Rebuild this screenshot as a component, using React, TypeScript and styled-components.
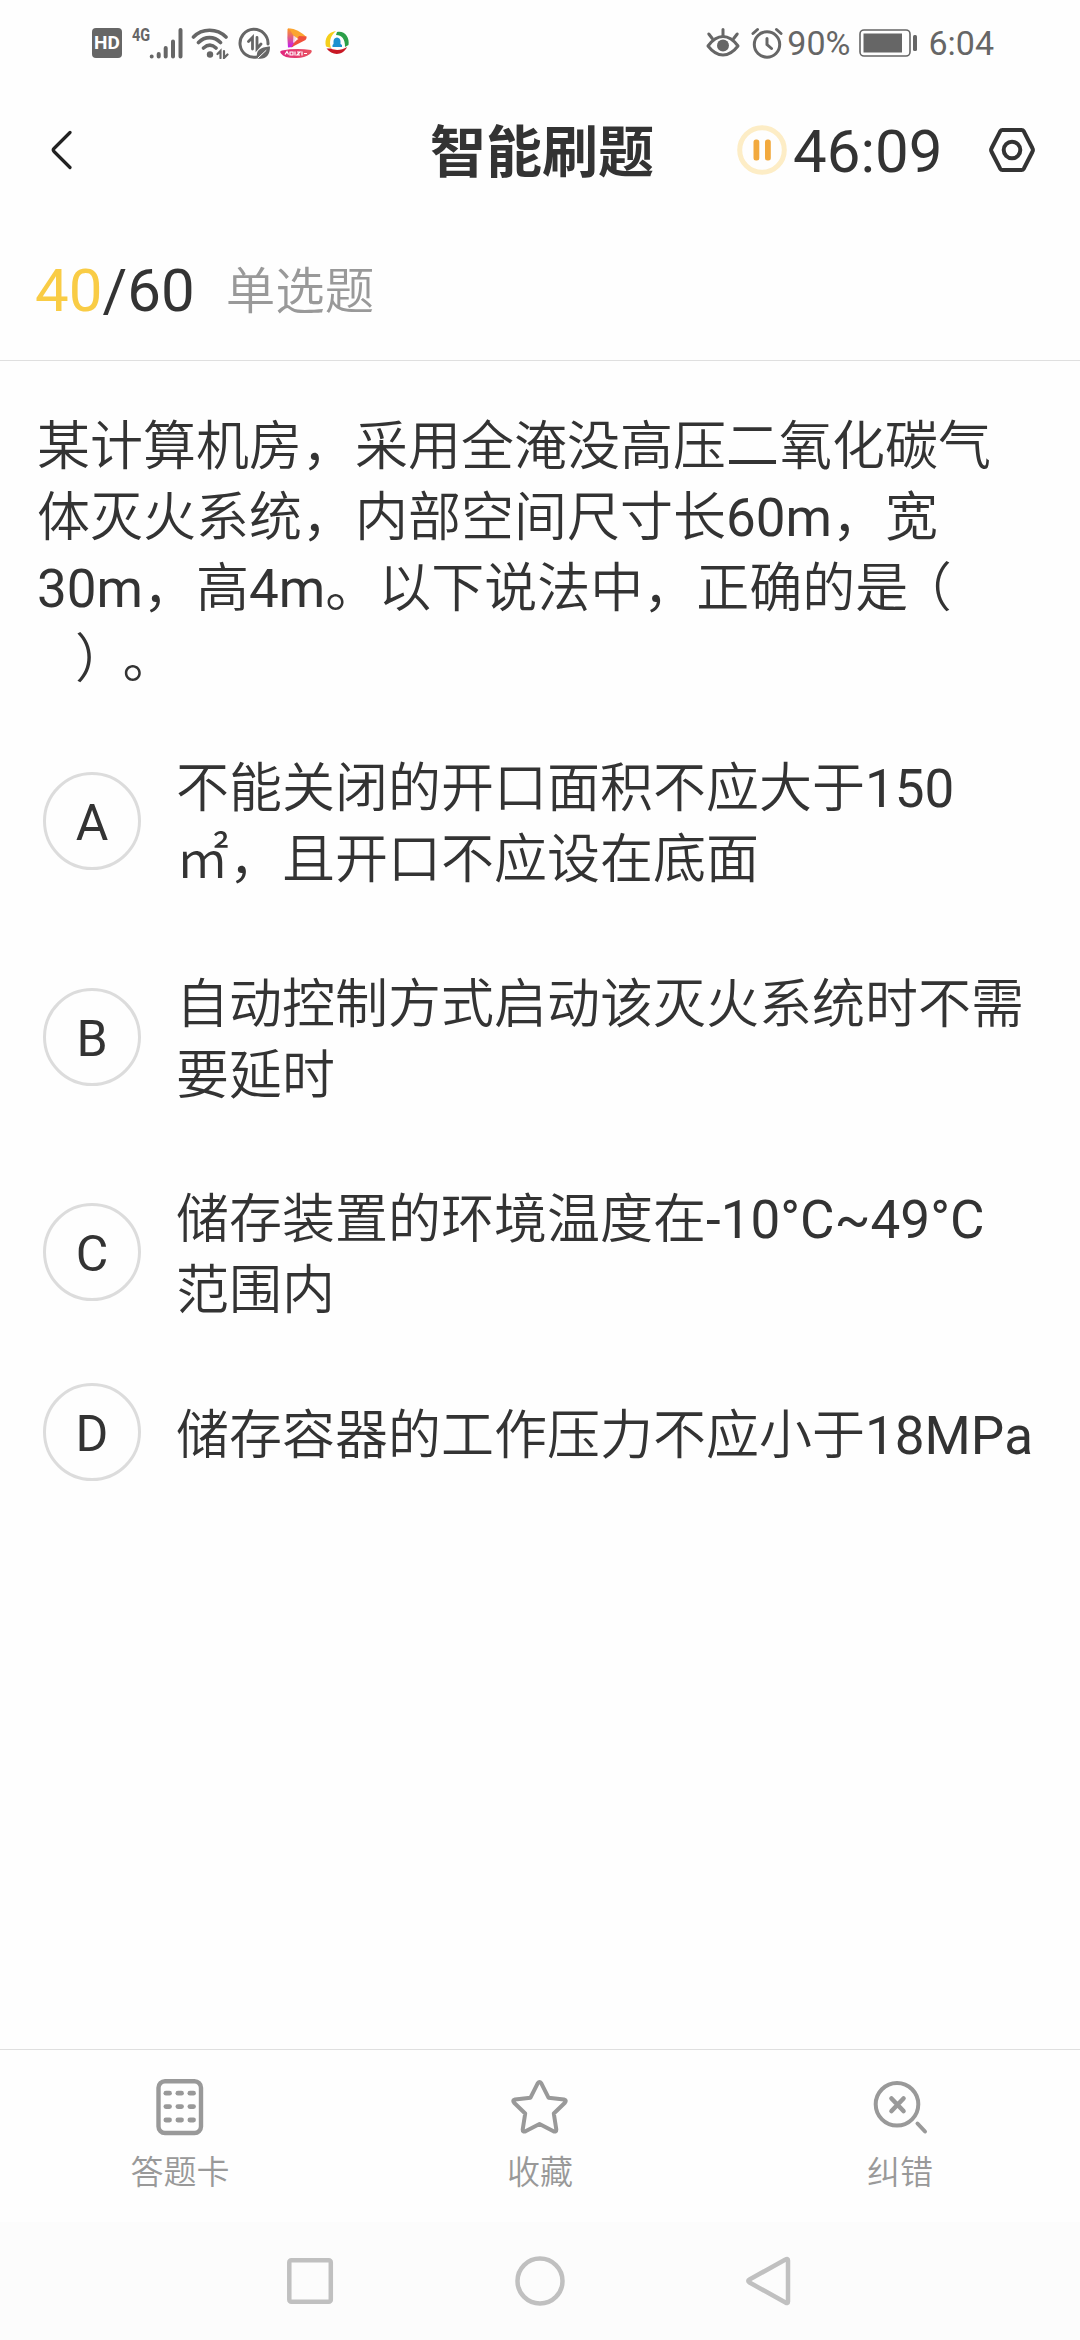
import React from "react";
import styled, { createGlobalStyle } from "styled-components";

const INK = "#333333";
const GREY = "#999999";
const STATUS = "#666666";

const GlobalStyle = createGlobalStyle`
  * { box-sizing: border-box; }
  body {
    margin: 0;
    background: #fefefe;
    color: ${INK};
    font-family: Roboto, "Noto Sans CJK SC", sans-serif;
    text-spacing-trim: space-all;
    font-kerning: none;
  }
  svg { display: block; flex: none; }
`;

const Screen = styled.div`
  width: 1080px;
  height: 2340px;
  display: flex;
  flex-direction: column;
  overflow: hidden;
`;

const StatusBar = styled.div`
  height: 86px;
  padding: 0 86px 0 92px;
  display: flex;
  justify-content: space-between;
  align-items: center;
  color: ${STATUS};
`;

const StatusGroup = styled.div<{ $gap: number }>`
  display: flex;
  align-items: center;
  gap: ${(p) => p.$gap}px;
`;

const HdBadge = styled.span`
  width: 30px;
  height: 30px;
  margin-right: 1px;
  border-radius: 4px;
  background: ${STATUS};
  color: #fff;
  font-size: 19px;
  font-weight: 700;
  line-height: 30px;
  text-align: center;
`;

const Signal = styled.div`
  display: flex;
  align-items: flex-start;
  height: 32px;
`;

const NetType = styled.span`
  width: 17px;
  font-size: 19px;
  font-weight: 700;
  line-height: 16px;
  transform: scaleX(0.76);
  transform-origin: left center;
`;

const StatusText = styled.span`
  font-size: 34px;
  line-height: 40px;
  white-space: nowrap;
`;

const BatteryPercent = styled(StatusText)`
  margin-left: -6px;
  margin-right: -2px;
`;

const Header = styled.header`
  height: 128px;
  padding: 0 45px 0 51px;
  display: grid;
  grid-template-columns: 379px 1fr 204px 94px;
  align-items: center;
`;

const Title = styled.h1`
  margin: 0;
  padding-top: 5px;
  font-size: 56px;
  font-weight: 700;
  line-height: 80px;
`;

const Timer = styled.div`
  display: flex;
  align-items: center;
  gap: 6px;
  font-size: 60px;
  line-height: 80px;
`;

const TimerText = styled.span`
  padding-top: 4px;
`;

const HeaderAction = styled.div`
  display: flex;
  justify-content: flex-end;
`;

const Progress = styled.div`
  height: 147px;
  padding: 7px 35px 0;
  display: flex;
  align-items: center;
  border-bottom: 1px solid #dfdfdf;
  font-size: 60px;
  line-height: 80px;
`;

const Current = styled.span`
  color: #f9cc45;
`;

const Kind = styled.span`
  margin-left: 31px;
  padding-bottom: 6px;
  color: ${GREY};
  font-family: "Noto Sans CJK SC DemiLight", "Noto Sans CJK SC", sans-serif;
  font-size: 49.500px;
  font-weight: 350;
`;

const Body = styled.main`
  flex: 1;
  padding: 51px 0 0 37px;
  font-family: Roboto, "Noto Sans CJK SC DemiLight", "Noto Sans CJK SC", sans-serif;
  font-size: 53px;
  line-height: 71px;
`;

const Question = styled.p`
  margin: 0 0 17.500px;
`;

const Line = styled.span<{ $indent?: number }>`
  display: block;
  padding-left: ${(p) => p.$indent ?? 0}px;
  white-space: nowrap;
`;

const Bracket = styled.span<{ $shift?: number; $tail?: number }>`
  font-feature-settings: "halt" 1;
  margin-left: ${(p) => p.$shift ?? 0}px;
  margin-right: ${(p) => p.$tail ?? 0}px;
`;

const Option = styled.div`
  padding: 36.500px 0 37px 6px;
  display: flex;
  align-items: center;
`;

const Letter = styled.span`
  flex: none;
  width: 98px;
  height: 98px;
  margin: -14px 35px -14px 0;
  border: 3px solid #dcdcdc;
  border-radius: 50%;
  font-size: 50px;
  line-height: 96px;
  text-align: center;
`;

const OptionText = styled.div`
  margin-top: 4px;
  margin-bottom: -4px;
`;

const Toolbar = styled.footer`
  height: 173px;
  border-top: 1px solid #dfdfdf;
  display: grid;
  grid-template-columns: repeat(3, 1fr);
`;

const Tool = styled.div`
  padding-top: 28px;
  display: flex;
  flex-direction: column;
  align-items: center;
  color: ${GREY};
  font-family: "Noto Sans CJK SC DemiLight", "Noto Sans CJK SC", sans-serif;
  font-size: 33px;
  font-weight: 350;
  line-height: 44px;
`;

const ToolIcon = styled.svg`
  margin-bottom: 10px;
`;

const NavBar = styled.nav`
  height: 118px;
  background: #fcfcfc;
  display: flex;
  align-items: center;
  justify-content: center;
  gap: 180px;
`;

const SignalBars = () => (
  <svg width="34" height="32" viewBox="0 0 34 32" stroke={STATUS} strokeWidth="4" strokeLinecap="round">
    <path d="M2.7 29.5v.1M9.7 27v2.6M16.7 21v8.6M24 14.5v15.1M31.5 3v26.6" />
  </svg>
);

const Wifi = () => (
  <svg width="38" height="32" viewBox="0 0 38 32" fill="none" stroke={STATUS} strokeWidth="3.6" strokeLinecap="round">
    <path d="M2.5 10C11 1 26 1 35 10M7.500 15.500C14 9 23 9 29.500 15.500M12.500 21C17 17 21 17 25 21" />
    <circle cx="19" cy="27.500" r="3.200" fill={STATUS} stroke="none" />
    <path d="M26.500 27l3-3v7M33 24v7l3.500-3.500" strokeWidth="2.200" />
  </svg>
);

const DataSaver = () => (
  <svg width="33" height="33" viewBox="0 0 33 33" fill="none" stroke={STATUS} strokeWidth="3" strokeLinecap="round">
    <path d="M19 30A14 14 0 1 1 30 17" />
    <path d="M10.500 14.500l4-4v11.500M19 10.500v11l4-4.500" strokeWidth="2.800" />
    <path d="M19.500 31.500C16.500 22 25 20 32 19.500C32 29 27 33 19.500 31.500Z" fill={STATUS} stroke="none" />
    <path d="M20 31L28 23.500" stroke="#fff" strokeWidth="1" />
  </svg>
);

const VideoApp = () => (
  <svg width="34" height="32" viewBox="0 0 34 32">
    <defs>
      <linearGradient id="playLeft" x1="0" y1="0" x2="0" y2="1">
        <stop offset="0" stopColor="#ff9a1f" />
        <stop offset="1" stopColor="#c01cf0" />
      </linearGradient>
      <linearGradient id="ribbon" x1="0" y1="0" x2="1" y2="0">
        <stop offset="0" stopColor="#e0257e" />
        <stop offset="1" stopColor="#e85560" />
      </linearGradient>
    </defs>
    <path d="M10 1.500L18 8L14 20L9 20.500Q8 11 8.500 2.500Q9 .8 10 1.500Z" fill="url(#playLeft)" />
    <path d="M10 1.200Q19 2 27.500 10L21 14L14 8Z" fill="#fba531" />
    <path d="M27.500 9.500Q28 11 26.500 13L12 20.500L20 9Z" fill="#f0503c" />
    <path d="M14.500 8.500l5 3.500-5.500 4z" fill="#fff" opacity=".75" />
    <path d="M3 23.500Q17 21 32 23Q34 24 31 27Q25 31.500 16 31Q5 31 2 26.500Q0 24 3 23.500Z" fill="url(#ribbon)" />
    <path d="M6 27.500l2-3 1.500 3M11 25h3v3h-3zM16 24.500v4M18 25h3l-3 3h3M23 24.500v4M25 26.500h3" fill="none" stroke="#fff" strokeWidth="1.200" />
  </svg>
);

const BrowserApp = () => (
  <svg width="28" height="26" viewBox="-2 0 28 26" fill="none">
    <path d="M12 1C4 2 0 9 2 16.500L7 18C5 12 6 6 12 1Z" fill="#f5cf1c" />
    <path d="M13 2C20 0 26 7 24.500 15L21 17C21 9 18 5 12 5Z" fill="#2b9f48" />
    <path d="M2.500 18.500C8 26 19 26 23 17C18 20 12 21 7 18.500Z" fill="#c81824" />
    <path d="M8.500 17V15L9.500 14V11.500Q9.500 8 13 7.500Q16.500 8 16.500 11.500V14L18 15V17Z" fill="#1b91d0" />
  </svg>
);

const Eye = () => (
  <svg width="34" height="32" viewBox="0 0 34 32" fill="none" stroke={STATUS} strokeWidth="3" strokeLinecap="round" strokeLinejoin="round">
    <path d="M2 19Q9 9.500 17 9.500T32 19Q25 28 17 28T2 19Z" />
    <circle cx="17" cy="18.500" r="6" fill={STATUS} stroke="none" />
    <path d="M17 2.500v6M2.800 7l3.500 4.500M31.200 7l-3.500 4.500" />
  </svg>
);

const Alarm = () => (
  <svg width="32" height="32" viewBox="0 0 32 32" fill="none" stroke={STATUS} strokeWidth="3" strokeLinecap="round">
    <circle cx="16" cy="17.500" r="12.700" />
    <path d="M16 11.500v6l4.500 4M2 6.500l4.500-4M30 6.500l-4.500-4" />
  </svg>
);

const Battery = () => (
  <svg width="59" height="28" viewBox="0 0 59 28">
    <rect x="1" y="1" width="50" height="26" rx="4" fill="none" stroke={STATUS} strokeWidth="1.600" />
    <rect x="4.500" y="4.500" width="38.500" height="19" fill={STATUS} />
    <rect x="54" y="6" width="4" height="16" rx="1.500" fill={STATUS} />
  </svg>
);

const Back = () => (
  <svg width="22" height="40" viewBox="0 0 22 40" fill="none" stroke="#222" strokeWidth="3.200" strokeLinecap="round">
    <path d="M19 2.500L3 18.500Q1.500 20 3 21.500L19 37.500" />
  </svg>
);

const Pause = () => (
  <svg width="50" height="50" viewBox="0 0 50 50">
    <circle cx="25" cy="25" r="22.300" fill="none" stroke="#fdedc6" strokeWidth="5" />
    <rect x="16.500" y="14.500" width="5.800" height="21" rx="2.500" fill="#f2a93e" />
    <rect x="28" y="14.500" width="5.800" height="21" rx="2.500" fill="#f2a93e" />
  </svg>
);

const Settings = () => (
  <svg width="46" height="44" viewBox="0 0 46 44" fill="none" stroke={INK} strokeWidth="4" strokeLinejoin="round">
    <path d="M13.500 2h19q1.500 0 2.300 1.300L43.300 20q1.200 2 0 4L34.800 40.700q-.8 1.300-2.300 1.300h-19q-1.500 0-2.300-1.300L2.700 24q-1.200-2 0-4L11.200 3.300Q12 2 13.500 2Z" />
    <circle cx="23" cy="22" r="8.300" />
  </svg>
);

const cells = [0, 1, 2].flatMap((r) => [0, 1, 2].map((c) => [c, r]));

const CardIcon = () => (
  <ToolIcon width="60" height="60" viewBox="0 0 60 60" fill="none" stroke={GREY} strokeWidth="4.400">
    <rect x="8.500" y="3.200" width="42.500" height="51.800" rx="6.500" />
    {cells.map(([c, r]) => (
      <rect key={`${c}${r}`} x={13.500 + c * 12} y={12.800 + r * 13.400} width="8.400" height="4.800" rx="2.400" fill={GREY} stroke="none" />
    ))}
  </ToolIcon>
);

const StarIcon = () => (
  <ToolIcon width="60" height="60" viewBox="0 0 60 60" fill="none" stroke={GREY} strokeWidth="4" strokeLinejoin="round">
    <path d="M27.800 5.200Q29.500 2.800 31.200 5.200L38.500 19.700L54 21.500Q57 22.200 54.900 24.700L43.800 35.500L46.300 51.500Q46.400 54.400 43.500 53.300L29.500 46L15.500 53.300Q12.600 54.400 12.700 51.500L15.200 35.500L4.100 24.700Q2 22.200 5 21.500L20.500 19.700Z" />
  </ToolIcon>
);

const ErrorIcon = () => (
  <ToolIcon width="60" height="60" viewBox="0 0 60 60" fill="none" stroke={GREY} strokeWidth="4" strokeLinecap="round">
    <circle cx="27" cy="26.300" r="21.300" />
    <path d="M21.500 20.500L33.500 33M33.500 20.500L21.500 33" strokeWidth="4.600" />
    <path d="M47.500 45.500l7.500 8" />
  </ToolIcon>
);

const options: [string, string[]][] = [
  ["A", ["不能关闭的开口面积不应大于150", "㎡，且开口不应设在底面"]],
  ["B", ["自动控制方式启动该灭火系统时不需", "要延时"]],
  ["C", ["储存装置的环境温度在-10°C~49°C", "范围内"]],
  ["D", ["储存容器的工作压力不应小于18MPa"]],
];

export default function App() {
  return (
    <Screen>
      <GlobalStyle />
      <StatusBar>
        <StatusGroup $gap={8.5}>
          <HdBadge>HD</HdBadge>
          <Signal>
            <NetType>4G</NetType>
            <SignalBars />
          </Signal>
          <Wifi />
          <DataSaver />
          <VideoApp />
          <BrowserApp />
        </StatusGroup>
        <StatusGroup $gap={10.5}>
          <Eye />
          <Alarm />
          <BatteryPercent>90%</BatteryPercent>
          <Battery />
          <StatusText>6:04</StatusText>
        </StatusGroup>
      </StatusBar>
      <Header>
        <Back />
        <Title>智能刷题</Title>
        <Timer>
          <Pause />
          <TimerText>46:09</TimerText>
        </Timer>
        <HeaderAction>
          <Settings />
        </HeaderAction>
      </Header>
      <Progress>
        <Current>40</Current>
        <span>/60</span>
        <Kind>单选题</Kind>
      </Progress>
      <Body>
        <Question>
          <Line>某计算机房，采用全淹没高压二氧化碳气</Line>
          <Line>体灭火系统，内部空间尺寸长60m，宽</Line>
          <Line>
            30m，高4m。以下说法中，正确的是<Bracket $shift={17}>（</Bracket>
          </Line>
          <Line $indent={38}>
            <Bracket $tail={21}>）</Bracket>。
          </Line>
        </Question>
        {options.map(([letter, lines]) => (
          <Option key={letter}>
            <Letter>{letter}</Letter>
            <OptionText>
              {lines.map((line) => (
                <Line key={line}>{line}</Line>
              ))}
            </OptionText>
          </Option>
        ))}
      </Body>
      <Toolbar>
        <Tool>
          <CardIcon />
          答题卡
        </Tool>
        <Tool>
          <StarIcon />
          收藏
        </Tool>
        <Tool>
          <ErrorIcon />
          纠错
        </Tool>
      </Toolbar>
      <NavBar>
        <svg width="50" height="50" viewBox="0 0 50 50" fill="none" stroke="#c0c0c0" strokeWidth="4.500">
          <rect x="4.300" y="4.300" width="41.500" height="41.500" rx="2" />
        </svg>
        <svg width="50" height="50" viewBox="0 0 50 50" fill="none" stroke="#c0c0c0" strokeWidth="4.500">
          <circle cx="25" cy="25" r="22.500" />
        </svg>
        <svg width="50" height="50" viewBox="0 0 50 50" fill="none" stroke="#c0c0c0" strokeWidth="4.500" strokeLinejoin="round">
          <path d="M40.500 3.500Q43 2 43 4.500V45.500Q43 48 40.500 46.500L4.500 26.500Q2 25 4.500 23.500Z" />
        </svg>
      </NavBar>
    </Screen>
  );
}
